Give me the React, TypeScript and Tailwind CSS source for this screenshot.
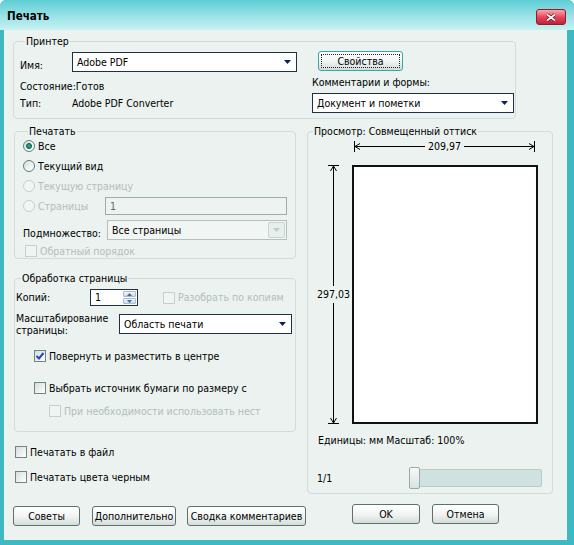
import React from "react";

type Kids = { children?: React.ReactNode; className?: string };

const DownArrow = ({ muted }: { muted?: boolean }) => (
  <svg width="7" height="4" viewBox="0 0 7 4">
    <path d="M0 0h7L3.5 4z" fill={muted ? "#c2ccca" : "#0c1f5a"} />
  </svg>
);

const Combo = ({ value, className = "", disabled }: { value: string; className?: string; disabled?: boolean }) =>
  disabled ? (
    <div className={`flex h-[20px] items-center border border-[#b3c0bd] bg-[#f1f5f3] pl-[4px] pr-px ${className}`}>
      <span className="flex-1">{value}</span>
      <span className="flex h-[16px] w-[17px] items-center justify-center rounded-[2px] border border-[#c9d3d0] bg-[#e8eeec]">
        <DownArrow muted />
      </span>
    </div>
  ) : (
    <div className={`flex h-[20px] items-center border border-[#1f2f44] bg-white pl-[4px] pr-[5px] ${className}`}>
      <span className="flex-1">{value}</span>
      <DownArrow />
    </div>
  );

const Btn = ({ children, className = "" }: Kids) => (
  <button className={`flex h-[20px] items-center justify-center rounded-[3px] border border-[#5d706d] bg-linear-to-b from-white via-[#f2f5f4] to-[#d3dcd9] ${className}`}>
    {children}
  </button>
);

const Radio = ({ label, checked, disabled }: { label: string; checked?: boolean; disabled?: boolean }) => (
  <div className="flex h-[20px] items-center gap-[3px]">
    <span
      className={
        disabled
          ? "flex h-[12px] w-[12px] items-center justify-center rounded-full border border-[#c6d0cd] bg-[#f1f5f3]"
          : "flex h-[12px] w-[12px] items-center justify-center rounded-full border border-[#5f7e7e] bg-linear-to-br from-[#d9e2df] to-white"
      }
    >
      {checked && <span className="h-[6px] w-[6px] rounded-full border border-[#0f4f47] bg-[#23a08f]" />}
    </span>
    <span className={disabled ? "text-[#b3bebb]" : ""}>{label}</span>
  </div>
);

const Check = ({ label, checked, disabled, className = "" }: { label: string; checked?: boolean; disabled?: boolean; className?: string }) => (
  <div className={`flex h-[14px] items-center gap-[3px] ${className}`}>
    <span
      className={
        disabled
          ? "flex h-[12px] w-[12px] items-center justify-center border border-[#c6d0cd] bg-[#f0f4f2]"
          : "flex h-[12px] w-[12px] items-center justify-center border border-[#6f8684] bg-linear-to-br from-[#d6dedb] to-white"
      }
    >
      {checked && (
        <svg width="10" height="10" viewBox="0 0 10 10">
          <path d="M1.5 5l2.5 2.5L8.5 2" stroke="#2446c4" strokeWidth="2" fill="none" />
        </svg>
      )}
    </span>
    <span className={disabled ? "text-[#b3bebb]" : ""}>{label}</span>
  </div>
);

const Group = ({ title, children, className = "" }: Kids & { title: string }) => (
  <fieldset className={`rounded-[4px] border border-[#d2dcd9] ${className}`}>
    <legend className="ml-[5px] px-px leading-[13px]">{title}</legend>
    {children}
  </fieldset>
);

const SpinArrow = ({ up }: { up?: boolean }) => (
  <svg width="5" height="3" viewBox="0 0 5 3">
    <path d={up ? "M0 3h5L2.5 0z" : "M0 0h5L2.5 3z"} fill="#4d6a8a" />
  </svg>
);

// dimension end marks for the page preview
const TickH = ({ flip }: { flip?: boolean }) => (
  <svg width="9" height="11" viewBox="0 0 9 11" className={flip ? "-scale-x-100" : ""}>
    <path d="M0.5 0v11M1 5.5h8M1 5.5l5-3M1 5.5l5 3" stroke="#000" fill="none" />
  </svg>
);

const TickV = ({ flip }: { flip?: boolean }) => (
  <svg width="11" height="9" viewBox="0 0 11 9" className={flip ? "-scale-y-100" : ""}>
    <path d="M0 0.5h11M5.5 1v8M5.5 1l-3 5M5.5 1l3 5" stroke="#000" fill="none" />
  </svg>
);

export default function App() {
  return (
    <div className="flex h-[545px] w-[574px] flex-col overflow-hidden rounded-t-[6px] bg-[#3db9c2] font-['DejaVu_Sans_Condensed','Liberation_Sans',sans-serif] text-[10.5px] leading-[13px] text-black">
      <div className="flex h-[30px] shrink-0 items-start justify-between bg-linear-to-b from-[#5ccdd5] via-[#95e1e5] to-[#c8f1f2] pl-[7px] pr-[8px]">
        <span className="mt-[9px] text-[11.5px] font-bold leading-[14px]">Печать</span>
        <div className="mt-[9px] flex h-[16px] w-[30px] items-center justify-center rounded-[3px] border border-[#8c1f2c] bg-linear-to-b from-[#f8a7ae] via-[#e84660] to-[#c41f3a]">
          <svg width="12" height="9" viewBox="0 0 12 9">
            <path d="M2 1.5l8 6M10 1.5l-8 6" stroke="#5a0d18" strokeWidth="3.2" />
            <path d="M2 1.5l8 6M10 1.5l-8 6" stroke="#fff" strokeWidth="1.8" />
          </svg>
        </div>
      </div>

      <div className="mb-[5px] ml-[4px] mr-[7px] flex flex-1 flex-col bg-[#ebf2ef] pl-[9px] pt-[5px]">
        <Group title="Принтер" className="w-[503px] pb-[5px] pl-[6px]">
          <div className="flex pt-[4px]">
            <div className="flex w-[292px] flex-col">
              <div className="flex h-[20px] items-end">
                <span className="w-[52px]">Имя:</span>
                <Combo value="Adobe PDF" className="w-[225px]" />
              </div>
              <span className="mt-[8px]">Состояние:Готов</span>
              <div className="mt-[4px] flex">
                <span className="w-[52px]">Тип:</span>
                <span>Adobe PDF Converter</span>
              </div>
            </div>
            <div className="flex flex-col">
              <button className="-mt-px ml-[6px] flex h-[20px] w-[85px] rounded-[3px] border border-[#35a8aa] bg-linear-to-b from-white via-[#f2f5f4] to-[#d3dcd9] p-[2px]">
                <span className="flex flex-1 items-center justify-center self-stretch border border-dotted border-[#222]">Свойства</span>
              </button>
              <span className="mt-[5px]">Комментарии и формы:</span>
              <Combo value="Документ и пометки" className="mt-[4px] w-[202px]" />
            </div>
          </div>
        </Group>

        <div className="mt-[6px] flex">
          <div className="flex w-[293px] flex-col">
            <Group title="Печатать" className="ml-px w-[282px] pl-[8px]">
              <div className="-mt-[2px] flex flex-col">
                <Radio label="Все" checked />
                <Radio label="Текущий вид" />
                <Radio label="Текущую страницу" disabled />
                <div className="flex h-[20px] items-center">
                  <div className="w-[82px]">
                    <Radio label="Страницы" disabled />
                  </div>
                  <div className="flex h-[18px] w-[182px] items-center border border-[#9fadaa] bg-[#eef3f1] pl-[4px] text-[#5f6967]">1</div>
                </div>
                <div className="mt-[4px] flex h-[20px] items-end">
                  <span className="w-[84px]">Подмножество:</span>
                  <Combo value="Все страницы" disabled className="w-[180px]" />
                </div>
                <Check label="Обратный порядок" disabled className="mt-[4px] pl-[2px]" />
              </div>
            </Group>

            <Group title="Обработка страницы" className="ml-px mt-[13px] w-[282px] pb-[13px] pl-px">
              <div className="flex flex-col">
                <div className="mt-[4px] flex h-[17px] items-center">
                  <span className="w-[74px]">Копий:</span>
                  <div className="flex h-[17px] w-[48px] border border-[#1f2f44] bg-white">
                    <span className="flex-1 pl-[4px] leading-[15px]">1</span>
                    <div className="flex w-[15px] flex-col gap-px p-px">
                      <span className="flex flex-1 items-center justify-center rounded-[1px] border border-[#a9bdd1] bg-linear-to-b from-[#f1f6fb] to-[#c7d9ec]">
                        <SpinArrow up />
                      </span>
                      <span className="flex flex-1 items-center justify-center rounded-[1px] border border-[#a9bdd1] bg-linear-to-b from-[#f1f6fb] to-[#c7d9ec]">
                        <SpinArrow />
                      </span>
                    </div>
                  </div>
                  <Check label="Разобрать по копиям" disabled className="ml-[25px]" />
                </div>
                <div className="mt-[6px] flex items-center">
                  <span className="w-[103px] leading-[12px]">
                    Масштабирование
                    <br />
                    страницы:
                  </span>
                  <Combo value="Область печати" className="w-[173px]" />
                </div>
                <Check label="Повернуть и разместить в центре" checked className="mt-[13px] pl-[18px]" />
                <Check label="Выбрать источник бумаги по размеру с" className="mt-[18px] pl-[18px]" />
                <Check label="При необходимости использовать нест" disabled className="mt-[9px] pl-[33px]" />
              </div>
            </Group>

            <Check label="Печатать в файл" className="mt-[13px] pl-[2px]" />
            <Check label="Печатать цвета черным" className="mt-[11px] pl-[2px]" />
          </div>

          <Group title="Просмотр: Совмещенный оттиск" className="ml-px w-[246px] pb-[4px]">
            <div className="flex flex-col">
              <div className="ml-[46px] mt-[3px] flex h-[11px] w-[181px] items-center">
                <TickH />
                <div className="h-px flex-1 bg-black" />
                <span className="px-[3px] leading-[11px]">209,97</span>
                <div className="h-px flex-1 bg-black" />
                <TickH flip />
              </div>
              <div className="ml-[9px] mt-[13px] flex">
                <div className="flex h-[259px] w-[33px] flex-col items-center">
                  <TickV />
                  <div className="w-px flex-1 bg-black" />
                  <span className="py-[2px]">297,03</span>
                  <div className="w-px flex-1 bg-black" />
                  <TickV flip />
                </div>
                <div className="ml-[2px] h-[259px] w-[186px] border-2 border-[#111] bg-white" />
              </div>
              <span className="ml-[10px] mt-[10px]">Единицы: мм Масштаб: 100%</span>
              <div className="ml-[9px] mt-[20px] flex h-[22px] items-center">
                <span className="w-[92px]">1/1</span>
                <div className="flex w-[133px] items-center">
                  <span className="h-[22px] w-[11px] rounded-[2px] border border-[#97aba7] bg-linear-to-b from-[#f6f9f8] to-[#d8e3e0]" />
                  <span className="h-[18px] flex-1 rounded-r-[2px] border border-l-0 border-[#b8cbc7] bg-[#d0e2df]" />
                </div>
              </div>
            </div>
          </Group>
        </div>

        <div className="mt-[10px] flex items-start">
          <Btn className="mt-[2px] w-[67px]">Советы</Btn>
          <Btn className="ml-[12px] mt-[2px] w-[84px]">Дополнительно</Btn>
          <Btn className="ml-[11px] mt-[2px] w-[119px]">Сводка комментариев</Btn>
          <Btn className="ml-[46px] w-[68px]">OK</Btn>
          <Btn className="ml-[12px] w-[67px]">Отмена</Btn>
        </div>
      </div>
    </div>
  );
}
